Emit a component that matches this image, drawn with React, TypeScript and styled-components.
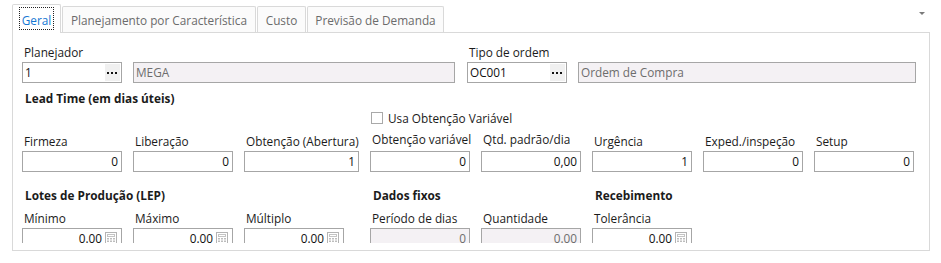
import React from 'react';
import styled, { createGlobalStyle } from 'styled-components';

const GlobalStyle = createGlobalStyle`
  body {
    margin: 0;
    background: #fff;
    font-family: 'Open Sans', 'Noto Sans', sans-serif;
    font-size: 11.8px;
    color: #1b1b1b;
  }
`;

type TabProps = {
  $active?: boolean;
  $width: number;
};

type InputProps = {
  $width: number;
  $disabled?: boolean;
};

type LabelProps = {
  $lift?: number;
};

const tabs = [
  { name: 'Geral', width: 49 },
  { name: 'Planejamento por Característica', width: 194 },
  { name: 'Custo', width: 49 },
  { name: 'Previsão de Demanda', width: 137 },
];

const DotsIcon = () => (
  <svg width="11" height="3" viewBox="0 0 11 3">
    <rect x="0" y="0" width="2" height="2" fill="#111" />
    <rect x="4" y="0" width="2" height="2" fill="#111" />
    <rect x="8" y="0" width="2" height="2" fill="#111" />
  </svg>
);

const CalcIcon = () => (
  <svg width="12" height="14" viewBox="0 0 12 14">
    <rect x="0.5" y="0.5" width="11" height="13" fill="#fff" stroke="#b4b4b4" />
    <rect x="2.5" y="2.5" width="7" height="2" fill="none" stroke="#c4c4c4" />
    {[0, 1, 2].map((r) =>
      [0, 1, 2].map((c) => (
        <rect key={`${r}-${c}`} x={2 + c * 3} y={6 + r * 2.5} width="2" height="1.5" fill="#bdbdbd" />
      ))
    )}
  </svg>
);

const App = () => {
  return (
    <Page>
      <GlobalStyle />
      <TabStrip>
        {tabs.map((t, i) => (
          <Tab key={t.name} $active={i === 0} $width={t.width}>
            {i === 0 ? <Focus>{t.name}</Focus> : t.name}
          </Tab>
        ))}
        <MenuArrow />
      </TabStrip>
      <Panel>
        <ScrollArea>
          <TopRow>
            <Field>
              <Label>Planejador</Label>
              <InputPair>
                <Box $width={100}>
                  <Value $align="left">1</Value>
                  <DotsButton>
                    <DotsIcon />
                  </DotsButton>
                </Box>
                <Box $width={322} $disabled>
                  <Value $align="left">MEGA</Value>
                </Box>
              </InputPair>
            </Field>
            <Field>
              <Label>Tipo de ordem</Label>
              <InputPair>
                <Box $width={100}>
                  <Value $align="left">OC001</Value>
                  <DotsButton>
                    <DotsIcon />
                  </DotsButton>
                </Box>
                <Box $width={338} $disabled>
                  <Value $align="left">Ordem de Compra</Value>
                </Box>
              </InputPair>
            </Field>
          </TopRow>

          <SectionTitle>Lead Time (em dias úteis)</SectionTitle>
          <Grid>
            <CheckRow>
              <CheckBox />
              <span>Usa Obtenção Variável</span>
            </CheckRow>
          </Grid>
          <LeadGrid>
            <Field>
              <Label>Firmeza</Label>
              <Box $width={100}><Value>0</Value></Box>
            </Field>
            <Field>
              <Label>Liberação</Label>
              <Box $width={100}><Value>0</Value></Box>
            </Field>
            <Field>
              <Label>Obtenção (Abertura)</Label>
              <Box $width={115}><Value>1</Value></Box>
            </Field>
            <Field>
              <Label $lift={2}>Obtenção variável</Label>
              <Box $width={100}><Value>0</Value></Box>
            </Field>
            <Field>
              <Label $lift={2}>Qtd. padrão/dia</Label>
              <Box $width={100}><Value>0,00</Value></Box>
            </Field>
            <Field>
              <Label>Urgência</Label>
              <Box $width={100}><Value>1</Value></Box>
            </Field>
            <Field>
              <Label>Exped./inspeção</Label>
              <Box $width={100}><Value>0</Value></Box>
            </Field>
            <Field>
              <Label>Setup</Label>
              <Box $width={100}><Value>0</Value></Box>
            </Field>
          </LeadGrid>

          <LotTitles>
            <SectionTitle>Lotes de Produção (LEP)</SectionTitle>
            <SectionTitle $col={4}>Dados fixos</SectionTitle>
            <SectionTitle $col={6}>Recebimento</SectionTitle>
          </LotTitles>
          <LotGrid>
            <Field>
              <Label>Mínimo</Label>
              <Box $width={100}><Value>0.00</Value><CalcSlot><CalcIcon /></CalcSlot></Box>
            </Field>
            <Field>
              <Label>Máximo</Label>
              <Box $width={100}><Value>0.00</Value><CalcSlot><CalcIcon /></CalcSlot></Box>
            </Field>
            <Field>
              <Label>Múltiplo</Label>
              <Box $width={100}><Value>0.00</Value><CalcSlot><CalcIcon /></CalcSlot></Box>
            </Field>
            <Field>
              <Label>Período de dias</Label>
              <Box $width={100} $disabled><Value>0</Value></Box>
            </Field>
            <Field>
              <Label>Quantidade</Label>
              <Box $width={100} $disabled><Value>0.00</Value></Box>
            </Field>
            <Field>
              <Label>Tolerância</Label>
              <Box $width={100}><Value>0.00</Value><CalcSlot><CalcIcon /></CalcSlot></Box>
            </Field>
          </LotGrid>
        </ScrollArea>
      </Panel>
    </Page>
  );
};

const Page = styled.div`
  padding-left: 12px;
  width: 918px;
`;

const TabStrip = styled.div`
  display: flex;
  align-items: flex-end;
  height: 32px;
`;

const Tab = styled.div<TabProps>`
  position: relative;
  z-index: ${({ $active }) => ($active ? 1 : 0)};
  box-sizing: border-box;
  width: ${({ $width }) => $width}px;
  height: ${({ $active }) => ($active ? 29 : 26)}px;
  margin-bottom: ${({ $active }) => ($active ? -1 : 0)}px;
  margin-right: 1px;
  padding-top: ${({ $active }) => ($active ? 2 : 5)}px;
  border: 1px solid #d9d9d9;
  border-bottom: none;
  border-radius: 2px 2px 0 0;
  background: ${({ $active }) => ($active ? '#fff' : '#fbfbfb')};
  color: ${({ $active }) => ($active ? '#1477d3' : '#6b6b6b')};
  display: flex;
  justify-content: center;
  align-items: flex-start;
  line-height: 16px;
  white-space: nowrap;
`;

const Focus = styled.span`
  padding: 5px 3px 2px;
  outline: 1px dotted #222;
  outline-offset: -1px;
`;

const MenuArrow = styled.div`
  margin-left: auto;
  margin-right: 5px;
  align-self: flex-start;
  margin-top: 12px;
  width: 0;
  height: 0;
  border-left: 3px solid transparent;
  border-right: 3px solid transparent;
  border-top: 3px solid #7a7a7a;
`;

const Panel = styled.div`
  box-sizing: border-box;
  height: 219px;
  border: 1px solid #d9d9d9;
  padding-bottom: 7px;
`;

const ScrollArea = styled.div`
  height: 210px;
  overflow: hidden;
  box-sizing: border-box;
  padding: 11px 0 0 9px;
`;

const TopRow = styled.div`
  display: flex;
  gap: 12px;
`;

const Field = styled.div`
  display: flex;
  flex-direction: column;
  align-items: flex-start;
`;

const Label = styled.div<LabelProps>`
  line-height: 16px;
  padding-left: 2px;
  margin-bottom: 2px;
  white-space: nowrap;
  color: #1b1b1b;
  transform: translateY(${({ $lift }) => -($lift || 0)}px);
`;

const InputPair = styled.div`
  display: flex;
  gap: 11px;
`;

const Box = styled.div<InputProps>`
  box-sizing: border-box;
  width: ${({ $width }) => $width}px;
  height: 21px;
  border: 1px solid #a6a6a6;
  background: ${({ $disabled }) => ($disabled ? '#f4f1f4' : '#fff')};
  color: ${({ $disabled }) => ($disabled ? '#6d6d6d' : '#111')};
  display: flex;
  align-items: stretch;
`;

const Value = styled.div<{ $align?: 'left' | 'right' }>`
  flex: 1;
  line-height: 19px;
  padding: 0 3px 0 2px;
  text-align: ${({ $align }) => $align || 'right'};
  white-space: nowrap;
  overflow: hidden;
`;

const DotsButton = styled.div`
  width: 15px;
  margin: 1px 1px 1px 0;
  background: #f0f0f0;
  display: flex;
  align-items: center;
  justify-content: center;
  padding-top: 1px;
`;

const CalcSlot = styled.div`
  width: 16px;
  display: flex;
  align-items: center;
  padding-top: 1px;
`;

const SectionTitle = styled.div<{ $col?: number }>`
  grid-column: ${({ $col }) => ($col ? `${$col} / span 2` : '1 / span 3')};
  font-weight: 700;
  line-height: 16px;
  padding-left: 3px;
  margin-top: 7px;
  color: #1b1b1b;
`;

const Grid = styled.div`
  display: grid;
  grid-template-columns: 100px 100px 115px 100px 100px 100px 100px 100px;
  column-gap: 11px;
  margin-top: 4px;
`;

const CheckRow = styled.label`
  grid-column: 4 / span 4;
  display: flex;
  align-items: center;
  gap: 5px;
  height: 16px;
  padding-left: 1px;
  color: #1b1b1b;
`;

const CheckBox = styled.span`
  box-sizing: border-box;
  width: 12px;
  height: 12px;
  border: 1px solid #a9a9a9;
  background: #fff;
`;

const LeadGrid = styled(Grid)`
  margin-top: 7px;
  align-items: end;
`;

const LotTitles = styled(Grid)`
  margin-top: 15px;
  & > div {
    margin-top: 0;
  }
`;

const LotGrid = styled(Grid)`
  margin-top: 7px;
`;

export default App;
